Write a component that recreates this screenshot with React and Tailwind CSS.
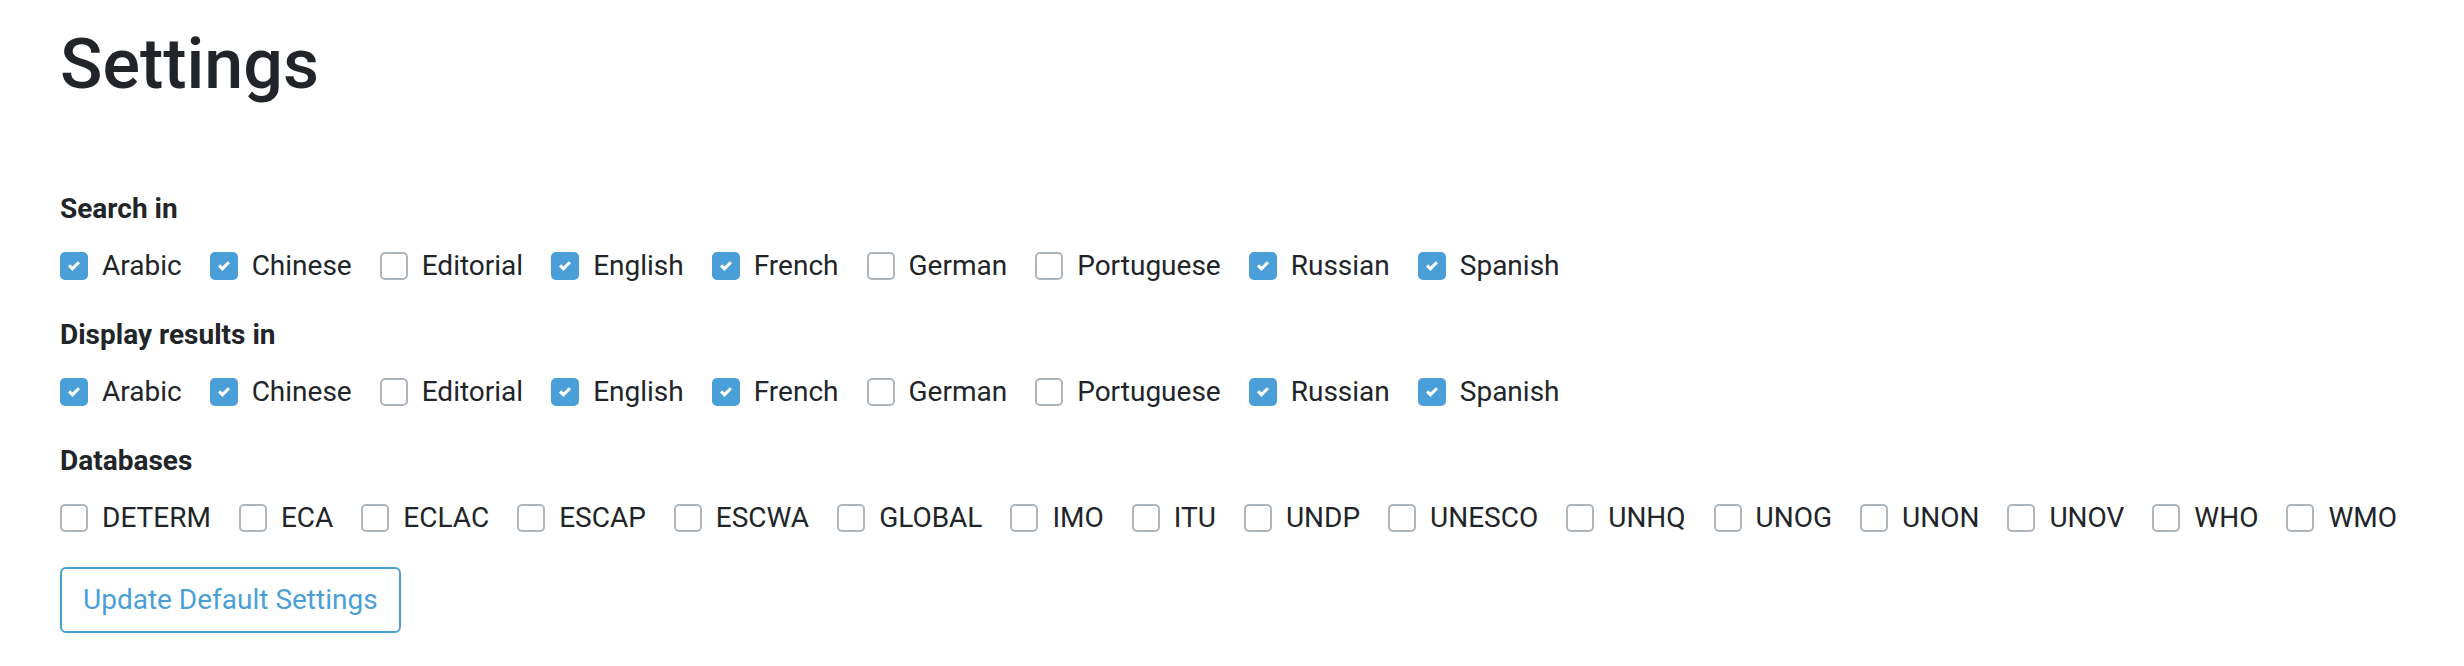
import React from "react";

const LANGS = ["Arabic", "Chinese", "Editorial", "English", "French", "German", "Portuguese", "Russian", "Spanish"];
const LANG_CHECKED = { Arabic: true, Chinese: true, English: true, French: true, Russian: true, Spanish: true };
const DBS = ["DETERM", "ECA", "ECLAC", "ESCAP", "ESCWA", "GLOBAL", "IMO", "ITU", "UNDP", "UNESCO", "UNHQ", "UNOG", "UNON", "UNOV", "WHO", "WMO"];

function Check({ label, checked }) {
  return (
    <label className="flex items-center mr-[28px] shrink-0">
      {checked ? (
        <span className="w-[28px] h-[28px] rounded-[5px] bg-[#4a9fd8] border-2 border-[#4a9fd8] flex items-center justify-center">
          <svg width="12" height="12" viewBox="0 0 8 8">
            <path fill="#fff" d="M6.564.75l-3.59 3.612-1.538-1.55L0 4.26 2.974 7.25 8 2.193z" />
          </svg>
        </span>
      ) : (
        <span className="w-[28px] h-[28px] rounded-[5px] bg-white border-2 border-[#adb5bd]" />
      )}
      <span className="ml-[14px] text-[28px] leading-[42px] text-[#212529]">{label}</span>
    </label>
  );
}

function Section({ title, items, checkedMap }) {
  return (
    <div className="mb-[27px]">
      <div className="text-[28px] leading-[42px] font-bold text-[#212529]">{title}</div>
      <div className="flex mt-[15px]">
        {items.map((it) => (
          <Check key={it} label={it} checked={!!checkedMap[it]} />
        ))}
      </div>
    </div>
  );
}

export default function App() {
  return (
    <div className="bg-white min-h-[666px] pl-[60px] pt-[20px]" style={{ fontFamily: "Roboto, 'Noto Sans', sans-serif" }}>
      <h1 className="text-[70px] leading-[88px] font-medium text-[#212529] mb-[80px]">Settings</h1>
      <Section title="Search in" items={LANGS} checkedMap={LANG_CHECKED} />
      <Section title="Display results in" items={LANGS} checkedMap={LANG_CHECKED} />
      <Section title="Databases" items={DBS} checkedMap={{}} />
      <button className="mt-[1px] border-2 border-[#4a9fd8] rounded-[6px] px-[21px] py-[10px] text-[28px] leading-[42px] text-[#4a9fd8] bg-white">
        Update Default Settings
      </button>
    </div>
  );
}
